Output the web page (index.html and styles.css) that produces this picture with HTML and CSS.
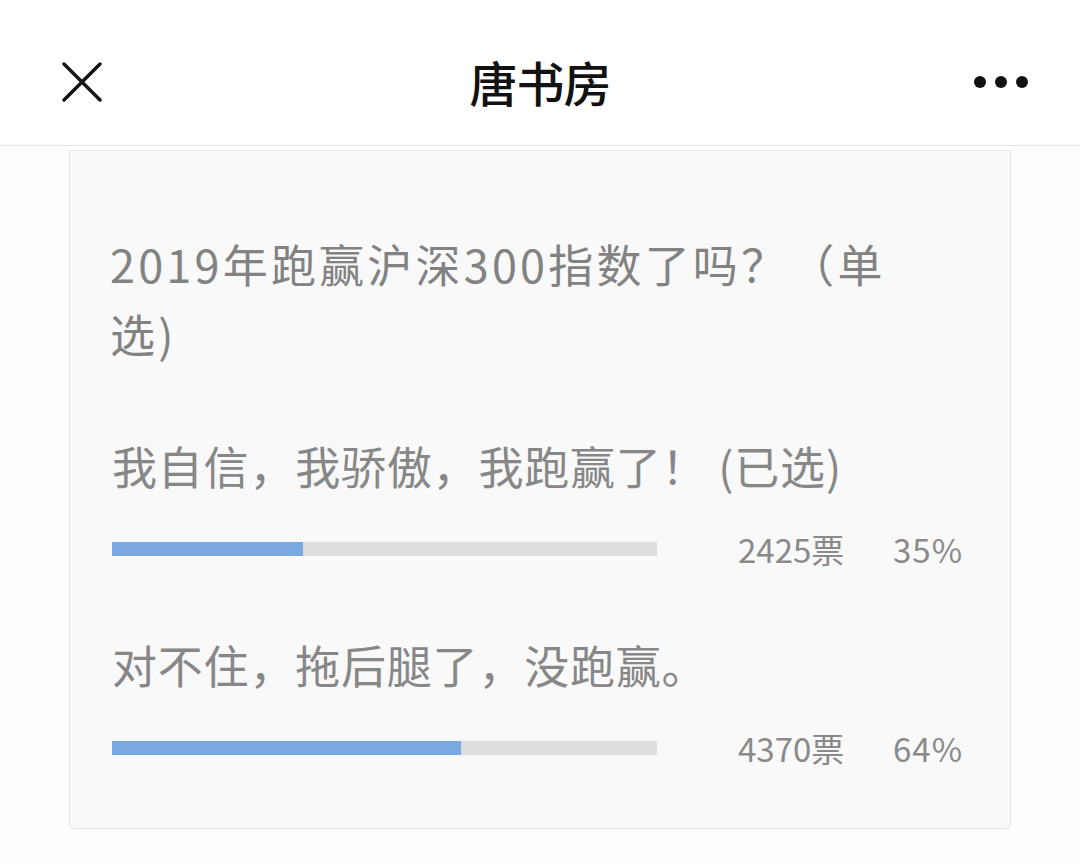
FILE: index.html
```html
<!DOCTYPE html>
<html lang="zh-CN">
<head>
<meta charset="utf-8">
<title>唐书房</title>
<link rel="stylesheet" href="styles.css">
</head>
<body>
<header class="topbar">
  <svg class="close" viewBox="0 0 40 40" width="40" height="40" aria-hidden="true">
    <path d="M2 2 L38 38 M38 2 L2 38" stroke="#111" stroke-width="3.4" stroke-linecap="round" fill="none"/>
  </svg>
  <h1 class="title">唐书房</h1>
  <div class="more" aria-hidden="true"><span></span><span></span><span></span></div>
</header>
<main class="page">
  <section class="card">
    <p class="question">2019年跑赢沪深300指数了吗？（单选)</p>
    <div class="option">
      <p class="label">我自信，我骄傲，我跑赢了！ (已选)</p>
      <div class="result">
        <div class="track"><div class="fill" style="width:35%"></div></div>
        <span class="count">2425票</span>
        <span class="pct">35%</span>
      </div>
    </div>
    <div class="option">
      <p class="label">对不住，拖后腿了，没跑赢。</p>
      <div class="result">
        <div class="track"><div class="fill" style="width:64%"></div></div>
        <span class="count">4370票</span>
        <span class="pct">64%</span>
      </div>
    </div>
  </section>
</main>
</body>
</html>
```
FILE: styles.css
```css
html, body {
  margin: 0;
  padding: 0;
  background: #fdfdfd;
  font-family: "Noto Sans CJK SC", "Noto Sans", sans-serif;
}
.topbar {
  height: 127px;
  padding: 18px 52px 0 62px;
  background: #fff;
  border-bottom: 1px solid #e4e4e4;
  display: flex;
  align-items: center;
  justify-content: space-between;
  position: relative;
}
.close {
  display: block;
}
.title {
  margin: 0;
  font-size: 48px;
  font-weight: 500;
  color: #111;
  position: absolute;
  left: 0;
  right: 0;
  top: 18px;
  text-align: center;
  line-height: 127px;
  pointer-events: none;
  letter-spacing: -1px;
}
.more {
  display: flex;
  gap: 9px;
  align-items: center;
}
.more span {
  width: 12px;
  height: 12px;
  border-radius: 50%;
  background: #111;
}
.page {
  padding: 4px 69px 0 69px;
}
.card {
  background: #f9f9f9;
  border: 1px solid #e6e6e6;
  border-radius: 0 0 6px 6px;
  box-shadow: 0 2px 2px rgba(0,0,0,0.04);
  padding: 78px 40px 60px 40px;
}
.question {
  margin: 0;
  font-size: 45px;
  line-height: 70px;
  width: 800px;
  color: #828282;
  letter-spacing: 3.2px;
}
.option {
  margin-top: 62px;
}
.option + .option {
  margin-top: 61px;
}
.label {
  margin: 0 0 0 2px;
  font-size: 45px;
  line-height: 70px;
  color: #878787;
  letter-spacing: 0.8px;
}
.result {
  margin-top: 28px;
  display: flex;
  align-items: center;
  height: 40px;
  padding-left: 2px;
}
.track {
  width: 545px;
  height: 14px;
  background: #dedede;
  flex: none;
}
.fill {
  height: 100%;
  background: #7aa8e0;
}
.count {
  margin-left: 81px;
  font-size: 33px;
  line-height: 40px;
  color: #8a8a8a;
  width: 110px;
}
.pct {
  margin-left: 45px;
  font-size: 33px;
  line-height: 40px;
  color: #8a8a8a;
  letter-spacing: 1px;
}
```
